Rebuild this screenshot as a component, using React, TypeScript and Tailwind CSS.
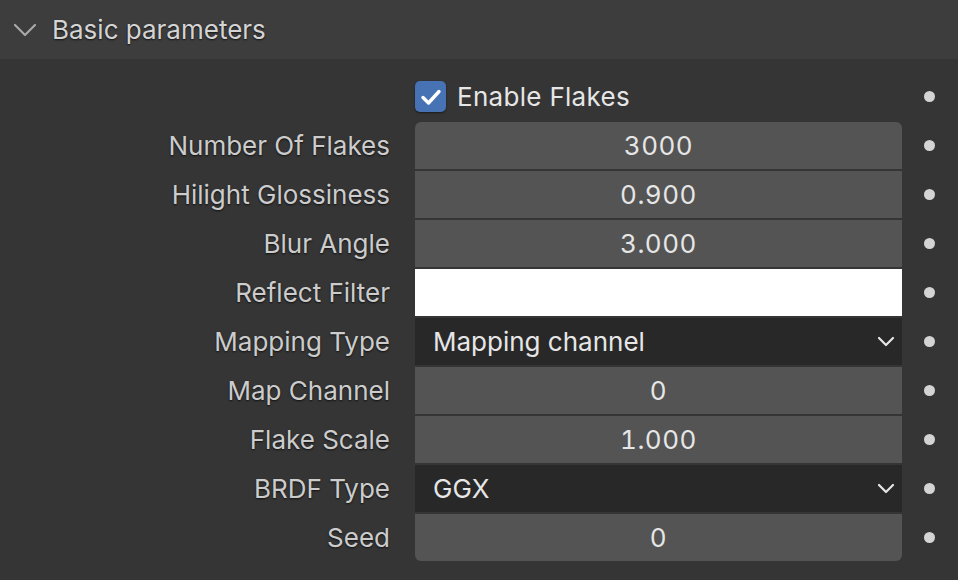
import React from 'react';

type Row =
  | { kind: 'number'; label: string; value: string }
  | { kind: 'color'; label: string }
  | { kind: 'select'; label: string; value: string };

const rows: Row[] = [
  { kind: 'number', label: 'Number Of Flakes', value: '3000' },
  { kind: 'number', label: 'Hilight Glossiness', value: '0.900' },
  { kind: 'number', label: 'Blur Angle', value: '3.000' },
  { kind: 'color', label: 'Reflect Filter' },
  { kind: 'select', label: 'Mapping Type', value: 'Mapping channel' },
  { kind: 'number', label: 'Map Channel', value: '0' },
  { kind: 'number', label: 'Flake Scale', value: '1.000' },
  { kind: 'select', label: 'BRDF Type', value: 'GGX' },
  { kind: 'number', label: 'Seed', value: '0' },
];

const Dot = () => (
  <div className="w-[54px] flex justify-center">
    <div className="w-[11px] h-[11px] rounded-full bg-[#d4d4d4]" />
  </div>
);

const Field = ({ row, first, last }: { row: Row; first: boolean; last: boolean }) => {
  const round = first ? 'rounded-t-[6px]' : last ? 'rounded-b-[6px]' : '';
  if (row.kind === 'color') {
    return <div className={`w-[487px] h-[47px] bg-white ${round}`} />;
  }
  if (row.kind === 'select') {
    return (
      <div className={`w-[487px] h-[47px] bg-[#282828] flex items-center justify-between pl-[18px] pr-[7px] text-[#e6e6e6] ${round}`}>
        <span>{row.value}</span>
        <svg width="18" height="11" viewBox="0 0 18 11" fill="none">
          <path d="M2 2l7 7 7-7" stroke="#e6e6e6" strokeWidth="2.2" strokeLinecap="round" strokeLinejoin="round" />
        </svg>
      </div>
    );
  }
  return (
    <div className={`w-[487px] h-[47px] bg-[#545454] flex items-center justify-center text-[#e6e6e6] tabular-nums tracking-[0.5px] ${round}`}>
      {row.value}
    </div>
  );
};

export default function App() {
  return (
    <div className="w-[958px] h-[580px] bg-[#353535] overflow-hidden font-['Inter',sans-serif] text-[26px] leading-none">
      <div className="h-[59px] bg-[#3d3d3d] flex items-center">
        <svg className="ml-[13px]" width="24" height="14" viewBox="0 0 24 14" fill="none">
          <path d="M2 2l10 10 10-10" stroke="#a8a8a8" strokeWidth="2.2" strokeLinecap="round" strokeLinejoin="round" />
        </svg>
        <span className="ml-[15px] text-[26px] text-[#d4d4d4] [text-shadow:0_1px_2px_rgba(0,0,0,0.7)]">
          Basic parameters
        </span>
      </div>

      <div className="pt-[14px] flex flex-col gap-[2px]">
        <div className="h-[47px] flex items-center">
          <div className="w-[415px]" />
          <div className="w-[487px] flex items-center">
            <div className="w-[31px] h-[31px] rounded-[5px] bg-[#4772b3] flex items-center justify-center shadow-[0_1px_2px_rgba(0,0,0,0.5)]">
              <svg width="22" height="18" viewBox="0 0 22 18" fill="none">
                <path d="M3 9.5l5.5 5.5L19 3.5" stroke="#ffffff" strokeWidth="3.4" strokeLinecap="round" strokeLinejoin="round" />
              </svg>
            </div>
            <span className="ml-[11px] text-[#e6e6e6] tracking-[0.3px]">Enable Flakes</span>
          </div>
          <Dot />
        </div>

        {rows.map((row, i) => (
          <div key={row.label} className="h-[47px] flex items-center">
            <div className="w-[390px] text-right text-[#cccccc] [text-shadow:0_1px_2px_rgba(0,0,0,0.7)]">
              {row.label}
            </div>
            <div className="w-[25px]" />
            <Field row={row} first={i === 0} last={i === rows.length - 1} />
            <Dot />
          </div>
        ))}
      </div>
    </div>
  );
}
